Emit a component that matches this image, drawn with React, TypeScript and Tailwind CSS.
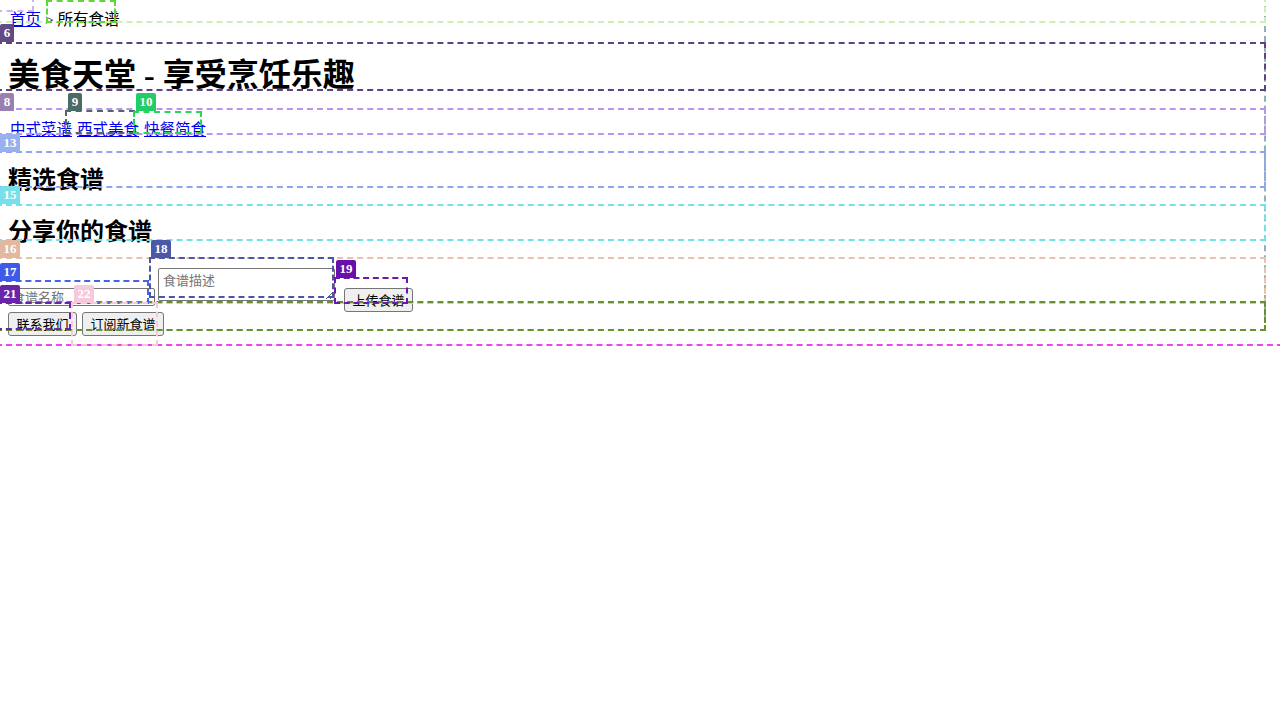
import type { ReactNode } from "react";

type Box = { x: number; y: number; r: number; b: number; c: string };
type Badge = { x: number; y: number; w: number; bg: string; label: string };

// debug outlines drawn over the page (line positions in px)
const boxes: Box[] = [
  { x: -3, y: -3, r: 1265, b: 330, c: "#8fb0b8" },
  { x: -3, y: -3, r: 1282, b: 345, c: "#ee44ee" },
  { x: -3, y: -3, r: 33, b: 11, c: "#d2aef2" },
  { x: -3, y: -3, r: 1265, b: 22, c: "#c8f2b4" },
  { x: 47, y: 1, r: 115, b: 22, c: "#5ad83a" },
  { x: -3, y: 43, r: 1265, b: 90, c: "#5c4380" },
  { x: -3, y: 109, r: 1265, b: 134, c: "#bc94f0" },
  { x: 66, y: 111, r: 134, b: 133, c: "#4c6a66" },
  { x: 134, y: 112, r: 201, b: 133, c: "#2ad65a" },
  { x: -3, y: 152, r: 1265, b: 187, c: "#8ea6f0" },
  { x: -3, y: 205, r: 1265, b: 240, c: "#74e0e8" },
  { x: -3, y: 258, r: 1265, b: 303, c: "#e8c2aa" },
  { x: -3, y: 302, r: 1265, b: 330, c: "#66922e" },
  { x: -3, y: 281, r: 148, b: 303, c: "#4464ec" },
  { x: 150, y: 258, r: 333, b: 297, c: "#4a56aa" },
  { x: 335, y: 278, r: 407, b: 303, c: "#6a18b0" },
  { x: -3, y: 303, r: 70, b: 329, c: "#6a22b0" },
  { x: 72, y: 303, r: 157, b: 345, c: "#f8c8d8" },
];

const badges: Badge[] = [
  { x: 0, y: 24, w: 14, bg: "#634a84", label: "6" },
  { x: 0, y: 93, w: 14, bg: "#9a80b0", label: "8" },
  { x: 68, y: 93, w: 14, bg: "#4a6b66", label: "9" },
  { x: 136, y: 93, w: 20, bg: "#22cc66", label: "10" },
  { x: 0, y: 134, w: 20, bg: "#98b0f0", label: "13" },
  { x: 0, y: 186, w: 20, bg: "#78e0ea", label: "15" },
  { x: 0, y: 240, w: 20, bg: "#e2b8a0", label: "16" },
  { x: 0, y: 263, w: 20, bg: "#3d5ae8", label: "17" },
  { x: 151, y: 240, w: 20, bg: "#4a58a8", label: "18" },
  { x: 336, y: 260, w: 20, bg: "#6a10aa", label: "19" },
  { x: 0, y: 285, w: 20, bg: "#6a24aa", label: "21" },
  { x: 74, y: 285, w: 20, bg: "#f8c8dc", label: "22" },
];

function Link({ children }: { children: ReactNode }) {
  return <a className="text-[#0000ee] underline">{children}</a>;
}

function Button({ children, className = "" }: { children: ReactNode; className?: string }) {
  return (
    <button
      className={`h-[24px] rounded-[3px] border border-[#767676] bg-[#efefef] px-[7px] font-['Noto_Sans_CJK_SC',sans-serif] text-[13px] leading-[22px] text-black ${className}`}
    >
      {children}
    </button>
  );
}

function Overlay() {
  return (
    <div className="pointer-events-none absolute inset-0">
      {boxes.map((b, i) => (
        <div
          key={i}
          className="absolute border-2 border-dashed"
          style={{ left: b.x - 1, top: b.y - 1, width: b.r - b.x + 2, height: b.b - b.y + 2, borderColor: b.c }}
        />
      ))}
      {badges.map((b) => (
        <div
          key={b.label}
          className="absolute flex h-[18px] items-center justify-center rounded-t-[2px] font-['Liberation_Serif',serif] text-[13px] font-bold text-white"
          style={{ left: b.x, top: b.y, width: b.w, backgroundColor: b.bg }}
        >
          {b.label}
        </div>
      ))}
    </div>
  );
}

export default function App() {
  return (
    <div className="relative h-[720px] overflow-hidden bg-white font-['Liberation_Serif','Noto_Sans_CJK_SC',serif] text-black">
      <div className="px-2">
        <nav className="pt-[10px] text-[15.5px] leading-[20px]">
          <span className="ml-[2px]">
            <Link>首页</Link> &gt; 所有食谱
          </span>
        </nav>

        <h1 className="mt-[25px] text-[32px] font-bold leading-[40px]">美食天堂 - 享受烹饪乐趣</h1>

        <nav className="mt-[25px] flex gap-[5px] pl-[2px] text-[15.5px] leading-[20px]">
          <Link>中式菜谱</Link>
          <Link>西式美食</Link>
          <Link>快餐简食</Link>
        </nav>

        <section className="mt-[25px]">
          <h2 className="text-[24px] font-bold leading-[30px]">精选食谱</h2>
        </section>

        <section className="mt-[22px]">
          <h2 className="text-[24px] font-bold leading-[30px]">分享你的食谱</h2>
          <form className="mt-[21px] flex items-start font-['Noto_Sans_CJK_SC',sans-serif]">
            <input
              placeholder="食谱名称"
              className="mt-[20px] h-[18px] w-[147px] rounded-[2px] border border-[#767676] px-[3px] text-[13px] placeholder:text-[#757575]"
            />
            <textarea
              placeholder="食谱描述"
              className="ml-[3px] h-[33px] w-[177px] rounded-[2px] border border-[#767676] px-[4px] py-[2px] text-[13px] leading-[18px] placeholder:text-[#757575]"
            />
            <Button className="ml-[9px] mt-[20px] w-[69px]">上传食谱</Button>
          </form>
        </section>

        <footer className="flex gap-[5px]">
          <Button className="w-[69px]">联系我们</Button>
          <Button className="w-[82px]">订阅新食谱</Button>
        </footer>
      </div>
      <Overlay />
    </div>
  );
}
